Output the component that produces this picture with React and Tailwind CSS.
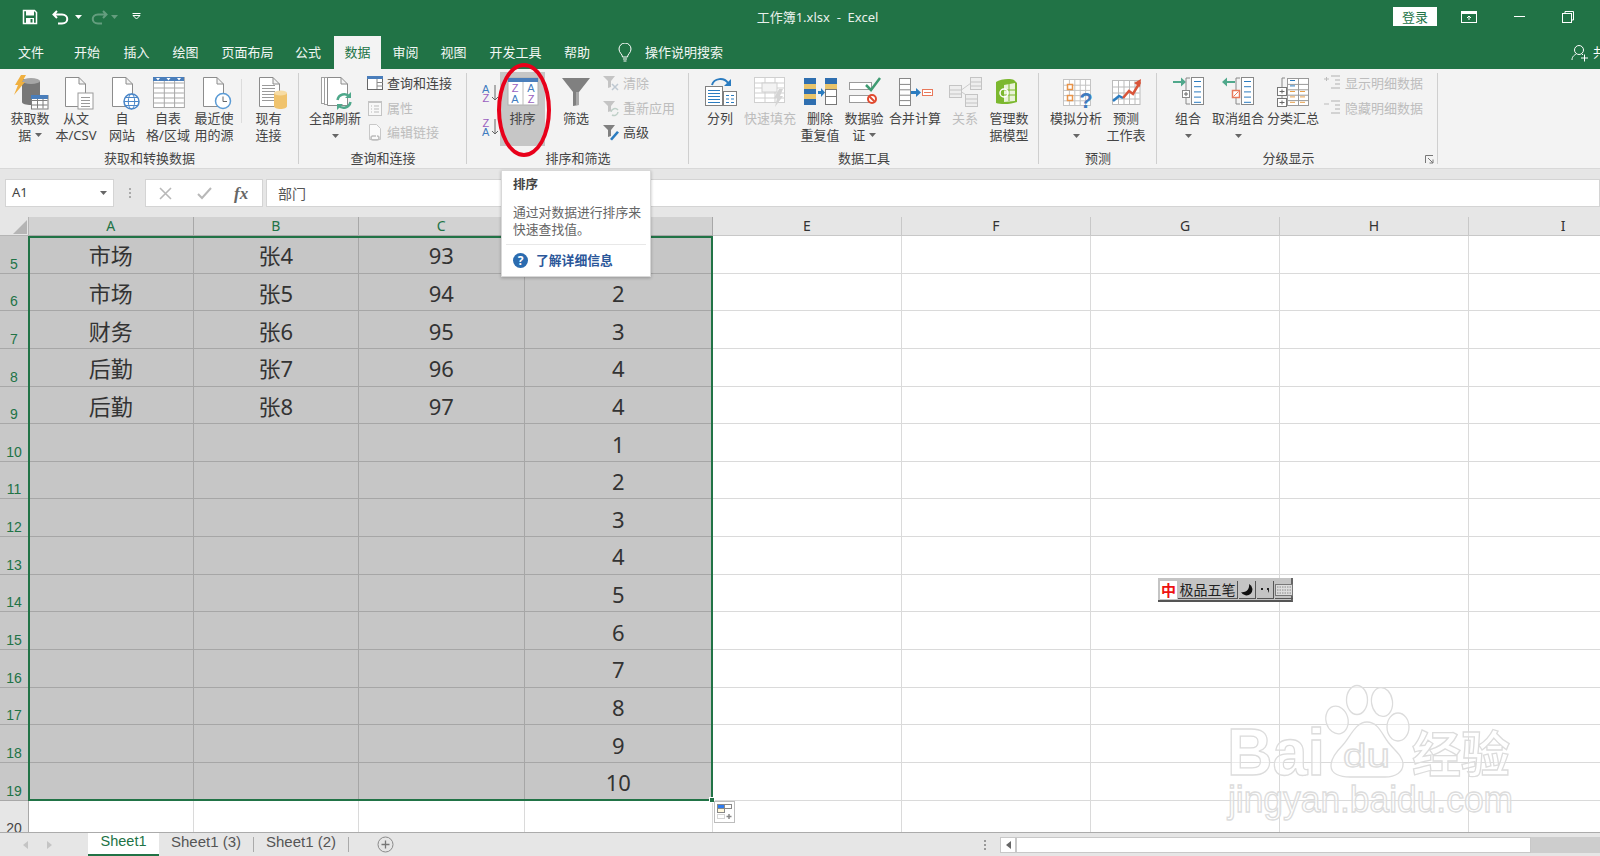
const FONT = "[font-family:'Noto_Sans','Noto_Sans_CJK_SC',sans-serif]";

// page shape with folded corner, used by several ribbon icons
function Page({ x, y, w = 21, h = 30, fill = "#fff", stroke = "#8c8c8c" }) {
  const f = 7;
  return (
    <path
      d={`M${x + 0.5} ${y + 0.5}H${x + w - f}L${x + w - 0.5} ${y + f}V${y + h - 0.5}H${x + 0.5}Z M${x + w - f} ${y + 0.5}V${y + f}H${x + w - 0.5}`}
      fill={fill}
      stroke={stroke}
    />
  );
}

function Lines({ x, y, w, n, gap = 3, color = "#9a9a9a" }) {
  return Array.from({ length: n }).map((_, i) => (
    <rect key={i} x={x} y={y + i * gap} width={w} height="1" fill={color} />
  ));
}

function Grid({ x, y, cols, rows, cw, ch, stroke = "#a8a8a8", fill = "#fff" }) {
  return (
    <g>
      <rect x={x + 0.5} y={y + 0.5} width={cols * cw} height={rows * ch} fill={fill} stroke={stroke} />
      {Array.from({ length: cols - 1 }).map((_, i) => (
        <rect key={i} x={x + 0.5 + (i + 1) * cw} y={y} width="1" height={rows * ch} fill={stroke} />
      ))}
      {Array.from({ length: rows - 1 }).map((_, i) => (
        <rect key={i} x={x} y={y + 0.5 + (i + 1) * ch} width={cols * cw} height="1" fill={stroke} />
      ))}
    </g>
  );
}

function Big({ children }) {
  return (
    <svg width="36" height="38" viewBox="0 0 36 38" className="block shrink-0 overflow-visible">
      {children}
    </svg>
  );
}

const BIG_ICONS = {
  getData: (
    <Big>
      <path d="M10 6h10c5 0 8 1.500 8 3v20c0 2-4 3-9 3s-9-1-9-3z" fill="#777" />
      <ellipse cx="19" cy="8" rx="9" ry="3" fill="#a6a6a6" />
      <path d="M9 2h5l-4 7h3L2 22l4-10H3z" fill="#f0b040" />
      <Grid x={19} y={22} cols={3} rows={3} cw={5.500} ch={4.500} stroke="#7f7f7f" />
      <rect x="19" y="22" width="17" height="4" fill="#4a7ebb" />
    </Big>
  ),
  text: (
    <Big>
      <Page x={7} y={4} />
      <rect x="20" y="20" width="15" height="16" fill="#fff" stroke="#9a9a9a" />
      <Lines x={23} y={24} w={9} n={4} />
    </Big>
  ),
  web: (
    <Big>
      <Page x={8} y={4} />
      <circle cx="27.500" cy="28.500" r="7.500" fill="#fff" stroke="#4a86c8" strokeWidth="1.500" />
      <ellipse cx="27.500" cy="28.500" rx="3.200" ry="7.500" fill="none" stroke="#4a86c8" />
      <path d="M20 28.500h15M21.500 24.500h12M21.500 32.500h12" stroke="#4a86c8" />
    </Big>
  ),
  table: (
    <Big>
      <Grid x={3} y={4} cols={3} rows={6} cw={10.300} ch={5} />
      <rect x="3" y="4" width="31" height="4" fill="#4a7ebb" />
      <path d="M6 5h4l-2 2.500zM16.500 5h4l-2 2.500zM27 5h4l-2 2.500z" fill="#fff" />
    </Big>
  ),
  recent: (
    <Big>
      <Page x={7} y={4} />
      <circle cx="27" cy="28" r="7.500" fill="#fff" stroke="#5b9bd5" strokeWidth="1.500" />
      <path d="M27 23.500V28.500H31" fill="none" stroke="#666" />
    </Big>
  ),
  existing: (
    <Big>
      <Page x={8} y={4} />
      <Lines x={11} y={12} w={13} n={6} />
      <path d="M23 20v13c0 2 3 3 6.500 3S36 35 36 33V20z" fill="#f0c36d" />
      <ellipse cx="29.500" cy="20" rx="6.500" ry="2.500" fill="#f7dca4" />
    </Big>
  ),
  refresh: (
    <Big>
      <rect x="4.500" y="4.500" width="15" height="26" fill="#fff" stroke="#a0a0a0" />
      <rect x="7.500" y="4.500" width="15" height="27" fill="#fff" stroke="#a0a0a0" />
      <Page x={10} y={4} w={21} h={29} />
      <path d="M20.500 27a7 7 0 0 1 12-3.500M33.500 29a7 7 0 0 1-12 3.500" fill="none" stroke="#4fa88b" strokeWidth="2.500" />
      <path d="M34 19v6h-6zM20 37v-6h6z" fill="#4fa88b" />
    </Big>
  ),
  sort: (
    <Big>
      <rect x="3" y="5" width="30" height="27" fill="#fff" stroke="#b0b0b0" />
      <rect x="3" y="5" width="30" height="4" fill="#4a7ebb" />
      <rect x="17.500" y="9" width="1" height="23" fill="#bbb" />
      <text x="10" y="19" textAnchor="middle" fontSize="11" fill="#9a5fc0" fontFamily="Liberation Sans">Z</text>
      <text x="10" y="30" textAnchor="middle" fontSize="11" fill="#3f7cc0" fontFamily="Liberation Sans">A</text>
      <text x="26" y="19" textAnchor="middle" fontSize="11" fill="#3f7cc0" fontFamily="Liberation Sans">A</text>
      <text x="26" y="30" textAnchor="middle" fontSize="11" fill="#9a5fc0" fontFamily="Liberation Sans">Z</text>
    </Big>
  ),
  filter: (
    <Big>
      <path d="M4 5h28L21 19v13l-6 1V19z" fill="#808080" />
      <path d="M18 19h3v13h-3z" fill="#a8a8a8" />
    </Big>
  ),
  split: (
    <Big>
      <path d="M10 12c2-7 12-8 16-2" fill="none" stroke="#2b7cc0" strokeWidth="2" />
      <path d="M29 6v7h-7z" fill="#2b7cc0" />
      <rect x="3.500" y="13.500" width="17" height="19" fill="#fff" stroke="#808080" />
      <Lines x={6} y={17} w={12} n={5} gap={3} color="#2b7cc0" />
      <rect x="21.500" y="18.500" width="13" height="14" fill="#fff" stroke="#808080" />
      <Lines x={24} y={22} w={3} n={3} gap={3.500} color="#2b7cc0" />
      <Lines x={29} y={22} w={3} n={3} gap={3.500} color="#2b7cc0" />
    </Big>
  ),
  flash: (
    <Big>
      <Grid x={2} y={4} cols={3} rows={5} cw={10} ch={5} stroke="#d0d0d0" />
      <rect x="10" y="10" width="15" height="9" fill="#f3f3f3" stroke="#d0d0d0" />
      <path d="M27 16h4l-3 7h3l-8 11 2-9h-3z" fill="#d4d4d4" />
    </Big>
  ),
  dedupe: (
    <Big>
      <rect x="2" y="5" width="12" height="27" fill="#2f6fb0" />
      <rect x="2" y="11" width="12" height="5" fill="#e9c46a" />
      <rect x="2" y="21" width="12" height="5" fill="#e9c46a" />
      <path d="M16 18h3v-3l4 4.500-4 4.500v-3h-3z" fill="#2b7cc0" />
      <rect x="23" y="5" width="12" height="6" fill="#2f6fb0" />
      <rect x="23" y="11" width="12" height="5" fill="#e9c46a" />
      <rect x="23.500" y="16.500" width="11" height="15" fill="#fff" stroke="#777" />
      <rect x="23" y="23" width="12" height="1" fill="#777" />
    </Big>
  ),
  validate: (
    <Big>
      <rect x="3.500" y="9.500" width="22" height="7" fill="#fff" stroke="#9a9a9a" />
      <rect x="3.500" y="22.500" width="22" height="7" fill="#fff" stroke="#9a9a9a" />
      <path d="M20 12l5 5 9-12" fill="none" stroke="#3f9b72" strokeWidth="2.500" />
      <circle cx="26" cy="26" r="4" fill="#fff" stroke="#e04a2f" strokeWidth="2" />
      <path d="M23.500 23.500l5 5" stroke="#e04a2f" strokeWidth="2" />
    </Big>
  ),
  consolidate: (
    <Big>
      <Grid x={2} y={5} cols={1} rows={5} cw={11} ch={5.400} stroke="#888" />
      <path d="M14 18h5v-3l5 4.500-5 4.500v-3h-5z" fill="#2b7cc0" />
      <rect x="25.500" y="16.500" width="10" height="6" fill="#fff" stroke="#e8785a" />
      <rect x="27" y="19" width="7" height="1" fill="#e8785a" />
    </Big>
  ),
  relation: (
    <Big>
      <path d="M13 18l11-8M13 18l11 7" stroke="#ccc" fill="none" />
      <Grid x={2} y={12} cols={1} rows={3} cw={12} ch={4} stroke="#c4c4c4" fill="#eee" />
      <Grid x={23} y={4} cols={1} rows={3} cw={11} ch={4} stroke="#c4c4c4" fill="#eee" />
      <Grid x={18} y={21} cols={1} rows={3} cw={12} ch={4} stroke="#c4c4c4" fill="#eee" />
    </Big>
  ),
  model: (
    <Big>
      <path d="M5 9c4-3 14-4 18-2l3 3v19c-5 2-15 3-21 1z" fill="#7cb82f" />
      <path d="M13 12l11-2v18l-11 1z" fill="#e9f3d8" />
      <path d="M13 17h11M13 22h11M18 11v17" stroke="#7cb82f" />
      <circle cx="13" cy="20" r="4" fill="none" stroke="#fff" strokeWidth="1.500" />
    </Big>
  ),
  whatif: (
    <Big>
      <Grid x={5} y={6} cols={5} rows={5} cw={5.400} ch={5.200} stroke="#c4c4c4" />
      <rect x="9.500" y="11.500" width="5" height="5" fill="#fff" stroke="#e8944a" strokeWidth="1.500" />
      <rect x="9.500" y="22.500" width="5" height="5" fill="#fff" stroke="#e8944a" strokeWidth="1.500" />
      <text x="28" y="35" textAnchor="middle" fontSize="22" fontWeight="700" fill="#3f7cc0" fontFamily="Liberation Sans">?</text>
    </Big>
  ),
  forecast: (
    <Big>
      <Grid x={4} y={7} cols={5} rows={4} cw={5.500} ch={6} stroke="#bbb" />
      <path d="M5 28l6-5 4 2" fill="none" stroke="#2b7cc0" strokeWidth="2.500" />
      <path d="M15 25l6-7 4 3 7-12" fill="none" stroke="#d9553a" strokeWidth="2.500" />
      <path d="M33 6l-1 8-6-4z" fill="#d9553a" />
    </Big>
  ),
};

function OutlineIcon({ arrow }) {
  // group and ungroup share the same bracket + column drawing
  return (
    <Big>
      {arrow === "in" ? (
        <path d="M3 8h8V4.500L16 9l-5 4.500V10H3z" fill="#4fa88b" />
      ) : (
        <path d="M15 8H7V4.500L2 9l5 4.500V10h8z" fill="#4fa88b" />
      )}
      <path d="M20 5h-4v26h4" fill="none" stroke="#888" />
      <rect x="21.500" y="4.500" width="12" height="27" fill="#fff" stroke="#888" />
      <Lines x={24} y={8} w={7} n={5} gap={5.200} color="#2b7cc0" />
      {arrow === "in" ? (
        <g>
          <rect x="12.500" y="17.500" width="7" height="7" fill="#fff" stroke="#888" />
          <path d="M14 21h4M16 19v4" stroke="#666" />
        </g>
      ) : (
        <g>
          <rect x="12.500" y="17.500" width="7" height="7" fill="#fff" stroke="#e8785a" strokeWidth="1.500" />
          <path d="M13.500 23.500l5-5" stroke="#e8785a" />
        </g>
      )}
    </Big>
  );
}

BIG_ICONS.group = <OutlineIcon arrow="in" />;
BIG_ICONS.ungroup = <OutlineIcon arrow="out" />;
BIG_ICONS.subtotal = (
  <Big>
    <Grid x={12} y={5} cols={2} rows={5} cw={10.500} ch={5.400} stroke="#999" />
    <path d="M10 5H7v9M7 22v9" fill="none" stroke="#888" />
    <rect x="2.500" y="14.500" width="9" height="8" fill="#fff" stroke="#777" />
    <rect x="2.500" y="25.500" width="9" height="8" fill="#fff" stroke="#777" />
    <path d="M4.500 18.500h5M7 16.500v4M4.500 29.500h5M7 27.500v4" stroke="#666" />
    <Lines x={15} y={7} w={5} n={2} gap={5.400} color="#2b7cc0" />
    <Lines x={15} y={18} w={5} n={3} gap={5.400} color="#e8a04a" />
    <Lines x={25} y={18} w={5} n={3} gap={5.400} color="#e8a04a" />
  </Big>
);

function Small({ children }) {
  return (
    <svg width="18" height="18" viewBox="0 0 18 18" className="block shrink-0">
      {children}
    </svg>
  );
}

const SMALL_ICONS = {
  queries: (
    <Small>
      <rect x="1.500" y="2.500" width="15" height="13" fill="#fff" stroke="#666" />
      <rect x="1" y="2" width="16" height="3" fill="#4a7ebb" />
      <path d="M11 5v10M11 8.500h6M11 12h6" stroke="#888" />
    </Small>
  ),
  props: (
    <Small>
      <rect x="2.500" y="2.500" width="13" height="14" fill="#f8f8f8" stroke="#c4c4c4" />
      <rect x="2" y="2" width="14" height="2" fill="#c4c4c4" />
      <path d="M5 7h1M8 7h5M5 10h1M8 10h5M5 13h1M8 13h5" stroke="#bbb" />
    </Small>
  ),
  links: (
    <Small>
      <path d="M3.500 1.500h7l4 4v11h-11z" fill="#fafafa" stroke="#c8c8c8" />
      <path d="M6 13h4M11 13a2 2 0 1 1 0 4H7a2 2 0 1 1 0-4" fill="none" stroke="#bdbdbd" strokeWidth="1.500" />
    </Small>
  ),
  clear: (
    <Small>
      <path d="M1 2h12L9 7v6l-3 1V7z" fill="#c4c4c4" />
      <path d="M10 10l6 6M16 10l-6 6" stroke="#bfc9d2" strokeWidth="1.500" />
    </Small>
  ),
  reapply: (
    <Small>
      <path d="M1 2h12L9 7v5l-3 1V7z" fill="#c4c4c4" />
      <path d="M9 13a4 4 0 0 1 7-2M16 13a4 4 0 0 1-6 3" fill="none" stroke="#bfd0c8" strokeWidth="1.500" />
    </Small>
  ),
  advanced: (
    <Small>
      <path d="M1 2h12L9 7v6l-3 1V7z" fill="#808080" />
      <path d="M8 16l7-8 2 1.500-7 8z" fill="#2b7cc0" />
    </Small>
  ),
  show: (
    <Small>
      <path d="M0 5h5M2.500 3v4" stroke="#bbb" />
      <path d="M7 2h9M11 6h5M11 10h5M7 14h9" stroke="#c8c8c8" strokeWidth="1.500" />
    </Small>
  ),
  hide: (
    <Small>
      <path d="M0 5h5" stroke="#bbb" />
      <path d="M7 2h9M11 6h5M11 10h5M7 14h9" stroke="#c8c8c8" strokeWidth="1.500" />
    </Small>
  ),
};

function Caret({ className = "" }) {
  return (
    <svg width="7" height="4" viewBox="0 0 7 4" className={`inline-block ${className}`}>
      <path d="M0 0h7L3.500 4z" fill="#666" />
    </svg>
  );
}

function BigButton({ icon, w, lines, disabled, active }) {
  return (
    <div className={`flex flex-col items-center shrink-0 ${w}`}>
      <div className="flex h-[37px] items-start justify-center">{BIG_ICONS[icon]}</div>
      {lines.map((l, i) => (
        <div
          key={i}
          className={`h-[16.500px] whitespace-nowrap text-[13px] leading-[16.500px] ${disabled ? "text-[#bdbdbd]" : "text-[#444]"}`}
        >
          {l === "▾" ? <Caret /> : l.endsWith("▾") ? <>{l.slice(0, -1)} <Caret className="mb-[2px]" /></> : l}
        </div>
      ))}
    </div>
  );
}

function SmallButton({ icon, label, disabled }) {
  return (
    <div className="flex h-[24.5px] items-center gap-[3px] whitespace-nowrap">
      {SMALL_ICONS[icon]}
      <span className={`text-[13px] leading-4 ${disabled ? "text-[#bdbdbd]" : "text-[#444]"}`}>{label}</span>
    </div>
  );
}

function RibbonGroup({ w, label, labelClass = "", children, launcher }) {
  return (
    <div className={`relative flex shrink-0 flex-col ${w}`}>
      <div className="flex h-[81px] pt-1">{children}</div>
      <div className={`h-4 whitespace-nowrap text-center text-[13px] leading-4 text-[#444] ${labelClass}`}>{label}</div>
      <div className="absolute right-0 top-1 h-[91px] w-px bg-[#cfcfcf]" />
      {launcher && (
        <svg width="9" height="9" viewBox="0 0 9 9" className="absolute bottom-[4px] right-[4px]">
          <path d="M0.500 8V0.500H8M3 3l5 5M8 4.500V8H4.500" fill="none" stroke="#777" />
        </svg>
      )}
    </div>
  );
}

function Ribbon() {
  return (
    <div className="flex h-[99px] shrink-0 bg-[#f3f3f3]">
      <RibbonGroup w="w-[299px]" label="获取和转换数据">
        <div className="w-[7px] shrink-0" />
        <BigButton icon="getData" w="w-[46px]" lines={["获取数", "据▾"]} />
        <BigButton icon="text" w="w-[46px]" lines={["从文", "本/CSV"]} />
        <BigButton icon="web" w="w-[46px]" lines={["自", "网站"]} />
        <BigButton icon="table" w="w-[46px]" lines={["自表", "格/区域"]} />
        <BigButton icon="recent" w="w-[46px]" lines={["最近使", "用的源"]} />
        <div className="mx-[4px] mt-[6px] h-[44px] w-px shrink-0 bg-[#dcdcdc]" />
        <BigButton icon="existing" w="w-[45px]" lines={["现有", "连接"]} />
      </RibbonGroup>

      <RibbonGroup w="w-[168px]" label="查询和连接">
        <div className="w-2 shrink-0" />
        <BigButton icon="refresh" w="w-[56px]" lines={["全部刷新", "▾"]} />
        <div className="-mt-[2px] flex flex-col pl-[3px]">
          <SmallButton icon="queries" label="查询和连接" />
          <SmallButton icon="props" label="属性" disabled />
          <SmallButton icon="links" label="编辑链接" disabled />
        </div>
      </RibbonGroup>

      <RibbonGroup w="w-[222px]" label="排序和筛选">
        <div className="flex w-[33px] shrink-0 flex-col items-end gap-[14px] pr-[0px] pt-[10px]">
          <svg width="18" height="20" viewBox="0 0 18 20" className="block">
            <text x="0" y="9.500" fontSize="11" fill="#3f7cc0" fontFamily="Liberation Sans">A</text>
            <text x="0.500" y="18.500" fontSize="11" fill="#9a5fc0" fontFamily="Liberation Sans">Z</text>
            <path d="M13 2v15M10 14l3 3 3-3" fill="none" stroke="#666" />
          </svg>
          <svg width="18" height="20" viewBox="0 0 18 20" className="block">
            <text x="0.500" y="9.500" fontSize="11" fill="#9a5fc0" fontFamily="Liberation Sans">Z</text>
            <text x="0" y="18.500" fontSize="11" fill="#3f7cc0" fontFamily="Liberation Sans">A</text>
            <path d="M13 2v15M10 14l3 3 3-3" fill="none" stroke="#666" />
          </svg>
        </div>
        <div className="-mt-[1px] h-[74px] w-[45px] shrink-0 bg-[#c6c6c6] pt-[1px]">
          <BigButton icon="sort" w="w-[45px]" lines={["排序"]} />
        </div>
        <div className="ml-[5px] shrink-0">
          <BigButton icon="filter" w="w-[52px]" lines={["筛选"]} />
        </div>
        <div className="-mt-[2px] flex flex-col">
          <SmallButton icon="clear" label="清除" disabled />
          <SmallButton icon="reapply" label="重新应用" disabled />
          <SmallButton icon="advanced" label="高级" />
        </div>
      </RibbonGroup>

      <RibbonGroup w="w-[350px]" label="数据工具">
        <div className="w-2 shrink-0" />
        <BigButton icon="split" w="w-[46px]" lines={["分列"]} />
        <BigButton icon="flash" w="w-[54px]" lines={["快速填充"]} disabled />
        <BigButton icon="dedupe" w="w-[46px]" lines={["删除", "重复值"]} />
        <BigButton icon="validate" w="w-[42px]" lines={["数据验", "证▾"]} />
        <BigButton icon="consolidate" w="w-[60px]" lines={["合并计算"]} />
        <BigButton icon="relation" w="w-[40px]" lines={["关系"]} disabled />
        <BigButton icon="model" w="w-[48px]" lines={["管理数", "据模型"]} />
      </RibbonGroup>

      <RibbonGroup w="w-[118px]" label="预测">
        <div className="w-[7px] shrink-0" />
        <BigButton icon="whatif" w="w-[60px]" lines={["模拟分析", "▾"]} />
        <BigButton icon="forecast" w="w-[40px]" lines={["预测", "工作表"]} />
      </RibbonGroup>

      <RibbonGroup w="w-[281px]" label="分级显示" labelClass="pr-[18px]" launcher>
        <div className="w-[6px] shrink-0" />
        <BigButton icon="group" w="w-[50px]" lines={["组合", "▾"]} />
        <BigButton icon="ungroup" w="w-[50px]" lines={["取消组合", "▾"]} />
        <BigButton icon="subtotal" w="w-[60px]" lines={["分类汇总"]} />
        <div className="-mt-[2px] flex flex-col pl-[1px]">
          <SmallButton icon="show" label="显示明细数据" disabled />
          <SmallButton icon="hide" label="隐藏明细数据" disabled />
        </div>
      </RibbonGroup>
    </div>
  );
}

function TitleBar() {
  return (
    <div className="flex h-9 shrink-0 items-center bg-[#217346] pb-[3px] text-white">
      <div className="flex w-[710px] items-center pl-[22px]">
        <svg width="16" height="16" viewBox="0 0 16 16">
          <path d="M1.500 1.500h11l2 2v11h-13z" fill="none" stroke="#fff" strokeWidth="1.500" />
          <rect x="4" y="2" width="8" height="4.500" fill="#fff" />
          <rect x="4" y="9" width="8" height="5" fill="#fff" />
          <rect x="8.500" y="10" width="2" height="3.500" fill="#217346" />
        </svg>
        <svg width="20" height="16" viewBox="0 0 20 16" className="ml-[14px]">
          <path d="M5 2L1.500 5.500 5 9M2 5.500h8c7 0 7 9 0 9H6" fill="none" stroke="#fff" strokeWidth="2" />
        </svg>
        <svg width="7" height="4" viewBox="0 0 7 4" className="ml-[3px]"><path d="M0 0h7L3.500 4z" fill="#fff" /></svg>
        <svg width="20" height="16" viewBox="0 0 20 16" className="ml-[6px] opacity-30">
          <path d="M15 2l3.500 3.500L15 9M18 5.500h-8c-7 0-7 9 0 9h4" fill="none" stroke="#fff" strokeWidth="2" />
        </svg>
        <svg width="7" height="4" viewBox="0 0 7 4" className="ml-[3px] opacity-30"><path d="M0 0h7L3.500 4z" fill="#fff" /></svg>
        <svg width="9" height="7" viewBox="0 0 9 7" className="ml-[14px]">
          <path d="M0.500 0.500h8M1 2.500h7L4.500 6z" fill="none" stroke="#fff" />
        </svg>
      </div>
      <div className="w-[215px] whitespace-pre text-center text-[13px] leading-4 text-[#e8f0eb]">工作簿1.xlsx  -  Excel</div>
      <div className="flex flex-1 items-center pl-[468px]">
        <div className="flex h-[19px] w-11 items-center justify-center bg-white text-[13px] leading-4 text-[#217346]">登录</div>
        <svg width="16" height="12" viewBox="0 0 16 12" className="ml-6">
          <rect x="0.500" y="0.500" width="15" height="11" fill="none" stroke="#fff" />
          <rect x="1" y="1" width="14" height="2" fill="#fff" />
          <path d="M8 9V5M6 7l2-2 2 2" fill="none" stroke="#fff" />
        </svg>
        <div className="ml-[37px] h-px w-[11px] bg-white" />
        <svg width="12" height="12" viewBox="0 0 12 12" className="ml-[37px]">
          <rect x="0.500" y="2.500" width="9" height="9" fill="none" stroke="#fff" />
          <path d="M3 2.500V0.500h8.500V9H9.500" fill="none" stroke="#fff" />
        </svg>
      </div>
    </div>
  );
}

const TABS = [
  ["文件", "w-[62px]"],
  ["开始", "w-[50px]"],
  ["插入", "w-[49px]"],
  ["绘图", "w-[49px]"],
  ["页面布局", "w-[75px]"],
  ["公式", "w-[49px] pr-[3px]"],
  ["数据", "w-[47px]"],
  ["审阅", "w-[49px]"],
  ["视图", "w-[47px]"],
  ["开发工具", "w-[77px]"],
  ["帮助", "w-[46px]"],
];

function TabBar() {
  return (
    <div className="flex h-[33px] shrink-0 items-stretch bg-[#217346]">
      {TABS.map(([t, w]) => (
        <div
          key={t}
          className={`flex shrink-0 items-center justify-center text-[13px] ${w} ${
            t === "数据" ? "bg-[#f3f3f3] text-[#217346]" : "text-[#f2f7f4]"
          }`}
        >
          {t}
        </div>
      ))}
      <div className="ml-[17px] flex items-center gap-[12px]">
        <svg width="16" height="20" viewBox="0 0 16 20">
          <path d="M5.500 14c0-3-3.500-4-3.500-8a6 6 0 0 1 12 0c0 4-3.500 5-3.500 8z" fill="none" stroke="#fff" />
          <path d="M6 16h4M6.500 18h3" stroke="#fff" />
        </svg>
        <span className="text-[13px] text-[#f2f7f4]">操作说明搜索</span>
      </div>
      <div className="flex flex-1 items-center justify-end overflow-hidden">
        <svg width="18" height="18" viewBox="0 0 18 18" className="mr-[4px] shrink-0">
          <circle cx="8" cy="6" r="4.500" fill="none" stroke="#fff" />
          <path d="M1 16c0-4 3-5 4-6M11 10l1 1M10 14h7M13.500 10.500v7" fill="none" stroke="#fff" />
        </svg>
        <span className="mr-[-6px] text-[13px] text-white">共</span>
      </div>
    </div>
  );
}

function FormulaBar() {
  return (
    <div className="flex h-[38px] shrink-0 items-start bg-[#e6e6e6]">
      <div className="ml-[5px] flex h-[28px] w-[109px] items-center justify-between border border-[#d4d4d4] bg-white pl-[6px] pr-[6px] text-[13px] text-[#444]">
        A1
        <Caret />
      </div>
      <div className="flex h-[28px] w-[31px] flex-col items-center justify-center gap-[2px]">
        <span className="h-[2px] w-[2px] bg-[#aaa]" />
        <span className="h-[2px] w-[2px] bg-[#aaa]" />
        <span className="h-[2px] w-[2px] bg-[#aaa]" />
      </div>
      <div className="flex h-[28px] w-[118px] items-center border border-[#d4d4d4] bg-white pl-[13px]">
        <svg width="13" height="13" viewBox="0 0 13 13"><path d="M1 1l11 11M12 1L1 12" stroke="#b8b8b8" strokeWidth="1.600" /></svg>
        <svg width="15" height="13" viewBox="0 0 15 13" className="ml-[25px]"><path d="M1 7l4 4 9-10" fill="none" stroke="#b8b8b8" strokeWidth="2" /></svg>
        <span className="ml-[22px] font-['Liberation_Serif',serif] text-[17px] font-bold italic leading-none text-[#666]">fx</span>
      </div>
      <div className="ml-[3px] flex h-[28px] flex-1 items-center border border-[#d4d4d4] bg-white pl-[11px] text-[14px] text-[#555]">部门</div>
    </div>
  );
}

const COLS = [
  ["A", "w-[164.5px]", true],
  ["B", "w-[165.5px]", true],
  ["C", "w-[165.5px]", true],
  ["D", "w-[188.5px]", true],
  ["E", "w-[189px]", false],
  ["F", "w-[189px]", false],
  ["G", "w-[189px]", false],
  ["H", "w-[189px]", false],
  ["I", "w-[189px]", false],
];

const ROWS = [
  [5, "市场", "张4", "93", "1"],
  [6, "市场", "张5", "94", "2"],
  [7, "财务", "张6", "95", "3"],
  [8, "后勤", "张7", "96", "4"],
  [9, "后勤", "张8", "97", "4"],
  [10, "", "", "", "1"],
  [11, "", "", "", "2"],
  [12, "", "", "", "3"],
  [13, "", "", "", "4"],
  [14, "", "", "", "5"],
  [15, "", "", "", "6"],
  [16, "", "", "", "7"],
  [17, "", "", "", "8"],
  [18, "", "", "", "9"],
  [19, "", "", "", "10"],
  [20, "", "", "", ""],
];

function Sheet() {
  return (
    <div className="relative min-h-0 flex-1 overflow-hidden bg-white">
      <div className="flex h-[19px]">
        <div className="flex h-[19px] w-[29px] shrink-0 items-end justify-end border-b border-r border-[#b5b5b5] bg-[#e6e6e6] pb-[1px] pr-[1px]">
          <svg width="14" height="14" viewBox="0 0 14 14"><path d="M14 0v14H0z" fill="#b5b5b5" /></svg>
        </div>
        {COLS.map(([c, w, sel]) => (
          <div
            key={c}
            className={`flex shrink-0 items-center justify-center border-b border-r text-[14px] leading-none ${w} ${
              sel ? "border-[#a8a8a8] bg-[#d2d2d2] text-[#217346]" : "border-[#c8c8c8] bg-[#e6e6e6] text-[#333]"
            }`}
          >
            {c}
          </div>
        ))}
      </div>
      {ROWS.map(([n, a, b, c, d]) => {
        const sel = n < 20;
        const vals = [a, b, c, d];
        return (
          <div key={n} className="flex h-[37.65px]">
            <div
              className={`flex w-[29px] shrink-0 items-end justify-center border-b border-r pb-[1px] font-['Liberation_Sans',sans-serif] text-[14px] leading-4 ${
                sel ? "border-[#a8a8a8] bg-[#c8c8c8] text-[#217346]" : "border-[#a8a8a8] bg-[#e6e6e6] text-[#444]"
              }`}
            >
              {n}
            </div>
            {COLS.map(([col, w, selCol], i) => (
              <div
                key={col}
                className={`flex shrink-0 items-center justify-center border-b border-r pt-[2px] text-[22px] leading-none text-[#333] ${w} ${
                  sel && selCol ? "border-[#a6a6a6] bg-[#c6c6c6]" : "border-[#dadada] bg-white"
                }`}
              >
                {selCol ? vals[i] : ""}
              </div>
            ))}
          </div>
        );
      })}

      {/* selection frame */}
      <div className="pointer-events-none absolute left-[28px] top-[19px] h-[565px] w-[685px] border-2 border-[#217346]" />
      <div className="absolute left-[709px] top-[580px] h-[6px] w-[6px] border border-white bg-[#217346]" />

      {/* quick analysis button */}
      <div className="absolute left-[714px] top-[584px] flex h-[22px] w-[21px] items-center justify-center border border-[#bdbdbd] bg-white">
        <svg width="16" height="16" viewBox="0 0 16 16">
          <rect x="0.500" y="0.500" width="7" height="4" fill="#2f7cf0" stroke="#888" />
          <rect x="7.500" y="0.500" width="7" height="4" fill="#fff" stroke="#888" />
          <rect x="0.500" y="4.500" width="7" height="4" fill="#fff8dc" stroke="#888" />
          <rect x="0.500" y="10.500" width="7" height="4" fill="#fff" stroke="#aaa" strokeDasharray="1 1" />
          <path d="M9.500 12.500h5M12 10v5" stroke="#888" strokeWidth="1.500" />
        </svg>
      </div>
    </div>
  );
}

function SheetTabs() {
  return (
    <div className="flex h-6 shrink-0 items-stretch border-t border-[#ababab] bg-[#e6e6e6] font-['Liberation_Sans','Noto_Sans',sans-serif] text-[15px] text-[#555]">
      <div className="flex w-[88px] shrink-0 items-center pl-[23px]">
        <svg width="5" height="8" viewBox="0 0 5 8"><path d="M5 0v8L0 4z" fill="#c4c4c4" /></svg>
        <svg width="5" height="8" viewBox="0 0 5 8" className="ml-[19px]"><path d="M0 0v8l5-4z" fill="#c4c4c4" /></svg>
      </div>
      <div className="flex w-[71px] shrink-0 items-center justify-center border-b-2 border-[#217346] bg-white pb-[3px] text-[14.500px] text-[#217346]">Sheet1</div>
      <div className="flex w-[94px] shrink-0 items-center justify-center pb-[4px]">
        Sheet1 (3)
      </div>
      <div className="my-[4px] w-px shrink-0 bg-[#aaa]" />
      <div className="flex w-[94px] shrink-0 items-center justify-center pb-[4px]">
        Sheet1 (2)
      </div>
      <div className="my-[4px] w-px shrink-0 bg-[#aaa]" />
      <div className="ml-[28px] flex shrink-0 items-center">
        <svg width="17" height="17" viewBox="0 0 17 17">
          <circle cx="8.500" cy="8.500" r="7.500" fill="none" stroke="#8a8a8a" />
          <path d="M4.500 8.500h8M8.500 4.500v8" stroke="#777" strokeWidth="1.300" />
        </svg>
      </div>
      <div className="ml-[590px] flex shrink-0 flex-col items-center justify-center gap-[2px]">
        <span className="h-[2px] w-[2px] bg-[#999]" />
        <span className="h-[2px] w-[2px] bg-[#999]" />
        <span className="h-[2px] w-[2px] bg-[#999]" />
      </div>
      <div className="ml-[14px] flex flex-1 items-center">
        <div className="flex h-[16px] w-[16px] shrink-0 items-center justify-center border border-[#c8c8c8] bg-white">
          <svg width="5" height="8" viewBox="0 0 5 8"><path d="M5 0v8L0 4z" fill="#666" /></svg>
        </div>
        <div className="h-[16px] w-[515px] shrink-0 border border-[#c8c8c8] bg-white" />
        <div className="h-[16px] flex-1 bg-[#cdcdcd]" />
      </div>
    </div>
  );
}

function Tooltip() {
  return (
    <div className="absolute left-[501px] top-[170px] w-[150px] border border-[#d8d8d8] bg-white shadow-[0_1px_3px_rgba(0,0,0,0.25)]">
      <div className="pl-[11px] pt-[6px] text-[12.500px] font-bold leading-4 text-[#444]">排序</div>
      <div className="px-[11px] pt-[11px] text-[12.800px] leading-[17px] text-[#666]">
        <div className="whitespace-nowrap">通过对数据进行排序来</div>
        <div className="whitespace-nowrap">快速查找值。</div>
      </div>
      <div className="mx-[4px] mt-[6px] h-px bg-[#e8e8e8]" />
      <div className="flex h-[31px] items-center gap-[8px] pl-[11px]">
        <span className="flex h-[15px] w-[15px] items-center justify-center rounded-full bg-[#2b6cb0] text-[12px] font-bold leading-none text-white">?</span>
        <span className="whitespace-nowrap text-[12.800px] font-bold text-[#2b579a]">了解详细信息</span>
      </div>
    </div>
  );
}

function ImeBar() {
  return (
    <div className="absolute left-[1158px] top-[578px] flex h-[24px] w-[135px] items-stretch gap-px border-b-2 border-r-2 border-b-[#555] border-r-[#666] bg-[#c4c4c4] pb-[1px] pl-[2px] pt-[3px]">
      <div className="flex w-[17px] shrink-0 items-center justify-center bg-white text-[15px] font-bold leading-none text-[#ee1111]">中</div>
      <div className="flex w-[60px] shrink-0 items-center justify-center whitespace-nowrap border-b border-r border-[#555] text-[14px] leading-none text-[#222]">极品五笔</div>
      <div className="flex w-[17px] shrink-0 items-center justify-center border-b border-r border-[#555]">
        <svg width="12" height="12" viewBox="0 0 12 12"><path d="M8 0a6 6 0 1 1-8 8c4 1 9-2 8-8z" fill="#111" /></svg>
      </div>
      <div className="flex w-[17px] shrink-0 items-center justify-center border-b border-r border-[#555]">
        <svg width="10" height="10" viewBox="0 0 10 10"><path d="M1 3h2v2H1zM7 3h2v3l-1 2V5H7z" fill="#222" /></svg>
      </div>
      <div className="flex flex-1 items-center justify-center border-b border-[#555]">
        <svg width="18" height="12" viewBox="0 0 18 12">
          <rect x="0.500" y="0.500" width="17" height="11" fill="#ddd" stroke="#777" />
          <path d="M2 3h14M2 6h14M2 9h14" stroke="#888" strokeDasharray="1.500 1" />
        </svg>
      </div>
    </div>
  );
}

function Watermark() {
  const s = { fill: "#fff", fillOpacity: 0.45, stroke: "#dcdcdc", strokeWidth: 1.3 };
  return (
    <svg width="300" height="150" viewBox="0 0 300 150" className="pointer-events-none absolute left-[1220px] top-[680px]">
      <ellipse cx="117" cy="40" rx="11" ry="14" transform="rotate(-15 117 40)" {...s} />
      <ellipse cx="137" cy="20" rx="10.500" ry="14.500" {...s} />
      <ellipse cx="162" cy="22" rx="10.500" ry="14.500" transform="rotate(-8 162 22)" {...s} />
      <ellipse cx="178" cy="47" rx="11" ry="14" {...s} />
      <path d="M147 42C135 42 130 58 122 66C114 74 111 80 111 86C111 94 120 97 130 97L165 97C176 97 183 92 183 84C183 76 174 70 168 62C162 54 158 42 147 42Z" {...s} />
      <text x="7" y="95" fontSize="66" fontWeight="700" fontFamily="Liberation Sans" textLength="98" lengthAdjust="spacingAndGlyphs" {...s}>Bai</text>
      <text x="123" y="87" fontSize="34" fontFamily="Liberation Sans" textLength="47" lengthAdjust="spacingAndGlyphs" {...s}>du</text>
      <text x="192" y="92" fontSize="49" fontWeight="700" fontFamily="Noto Sans CJK SC" {...s}>经验</text>
      <text x="8" y="132" fontSize="37" fontFamily="Liberation Sans" textLength="285" lengthAdjust="spacingAndGlyphs" {...s}>jingyan.baidu.com</text>
    </svg>
  );
}

export default function App() {
  return (
    <div className={`relative flex h-[856px] w-[1600px] flex-col overflow-hidden bg-white ${FONT}`}>
      <TitleBar />
      <TabBar />
      <Ribbon />
      <div className="h-[11px] shrink-0 border-t border-[#d8d8d8] bg-[#e6e6e6]" />
      <FormulaBar />
      <Sheet />
      <SheetTabs />

      <Tooltip />
      {/* hand-drawn highlight from the screenshot's author */}
      <div className="pointer-events-none absolute left-[497px] top-[63px] h-[94px] w-[54px] rounded-[50%] border-4 border-[#e8001a]" />
      <ImeBar />
      <Watermark />
    </div>
  );
}
